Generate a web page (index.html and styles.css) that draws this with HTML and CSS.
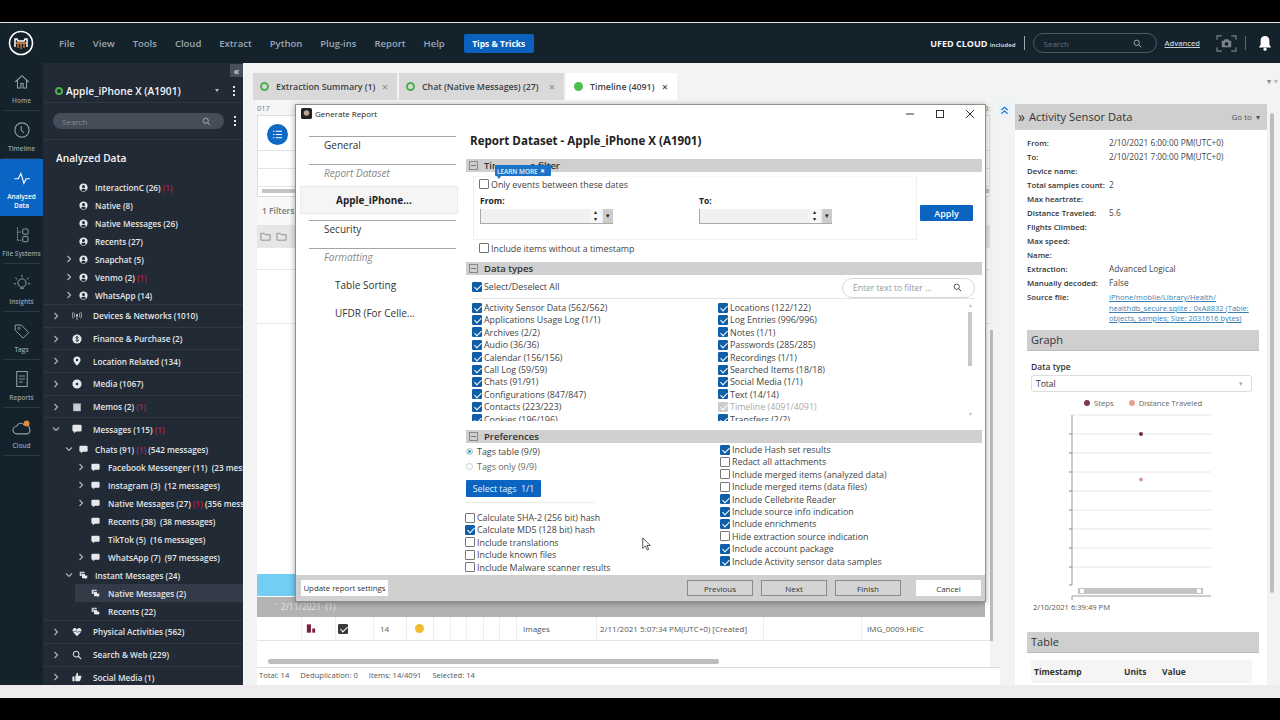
FILE: index.html
```html
<!DOCTYPE html>
<html lang="en">
<head>
    <meta charset="UTF-8">
    <meta name="viewport" content="width=device-width, initial-scale=1.0">
    <title>Generate Report</title>
    <link rel="stylesheet" href="styles.css">
</head>
<body>

<svg class="sprites" width="0" height="0">
    <symbol id="i-home" viewBox="0 0 24 24"><path d="M3 12 12 3.500 21 12M6 10v10h4.500v-6h3v6H18V10" fill="none" stroke="currentColor" stroke-width="1.400"/></symbol>
    <symbol id="i-clock" viewBox="0 0 24 24"><circle cx="12" cy="12" r="9.500" fill="none" stroke="currentColor" stroke-width="1.500"/><path d="M11 6.500V12l3.500 4" fill="none" stroke="currentColor" stroke-width="1.400"/></symbol>
    <symbol id="i-pulse" viewBox="0 0 24 24"><path d="M2 13h5l3.500-7 4 13 3-6h5" fill="none" stroke="currentColor" stroke-width="1.500"/></symbol>
    <symbol id="i-files" viewBox="0 0 24 24"><path d="M6 2v18M6 8h5M6 19h5" fill="none" stroke="currentColor" stroke-width="1.200" stroke-dasharray="2 1"/><rect x="13" y="4" width="7" height="7" rx="1" fill="none" stroke="currentColor" stroke-width="1.300"/><rect x="13" y="14" width="7" height="7" rx="1" fill="none" stroke="currentColor" stroke-width="1.300"/></symbol>
    <symbol id="i-bulb" viewBox="0 0 24 24"><circle cx="12" cy="12" r="5.500" fill="none" stroke="currentColor" stroke-width="1.300"/><path d="M9.500 19h5M12 1.500v3M3 5l2.500 2M21 5l-2.500 2M1 13h3M20 13h3" fill="none" stroke="currentColor" stroke-width="1.300"/></symbol>
    <symbol id="i-tag" viewBox="0 0 24 24"><path d="M3 4h8l10 10-7.500 7.500L3 11z" fill="none" stroke="currentColor" stroke-width="1.300"/><circle cx="8" cy="8.500" r="1.500" fill="none" stroke="currentColor"/></symbol>
    <symbol id="i-report" viewBox="0 0 24 24"><path d="M5 2h14v20H5z" fill="none" stroke="currentColor" stroke-width="1.400"/><path d="M8 8h8M8 12h8M8 16h5" fill="none" stroke="currentColor" stroke-width="1.200"/></symbol>
    <symbol id="i-person" viewBox="0 0 24 24"><path fill-rule="evenodd" d="M12 1a11 11 0 1 0 0 22 11 11 0 0 0 0-22zm0 4.500a4 4 0 1 1 0 8 4 4 0 0 1 0-8zM5.500 18.500c1-2.500 3.500-3.500 6.500-3.500s5.500 1 6.500 3.500a9 9 0 0 1-13 0z"/></symbol>
    <symbol id="i-signal" viewBox="0 0 24 24"><circle cx="12" cy="10" r="2.500"/><path d="M12 12v10M7 5c-2.500 3-2.500 7 0 10M17 5c2.500 3 2.500 7 0 10M3.500 2c-4 5-4 11 0 16M20.500 2c4 5 4 11 0 16" fill="none" stroke="currentColor" stroke-width="1.600"/></symbol>
    <symbol id="i-dollar" viewBox="0 0 24 24"><circle cx="12" cy="12" r="11"/><path d="M16 8.500c-1-2-7-2.500-7 .5s7 2.500 7 6-6 2.500-7.500.5M12 4.500v15" fill="none" stroke="#222a35" stroke-width="2"/></symbol>
    <symbol id="i-pin" viewBox="0 0 24 24"><path fill-rule="evenodd" d="M12 1a8.500 8.500 0 0 0-8.500 8.500C3.500 15 12 23 12 23s8.500-8 8.500-13.500A8.500 8.500 0 0 0 12 1zm0 5.500a3 3 0 1 1 0 6 3 3 0 0 1 0-6z"/></symbol>
    <symbol id="i-disc" viewBox="0 0 24 24"><path fill-rule="evenodd" d="M12 1a11 11 0 1 0 0 22 11 11 0 0 0 0-22zm0 8a3 3 0 1 1 0 6 3 3 0 0 1 0-6z"/></symbol>
    <symbol id="i-memo" viewBox="0 0 24 24"><path d="M3 3h18v19H3z" opacity=".85"/><path d="M6 1v4M10 1v4M14 1v4M18 1v4" stroke="#222a35" stroke-width="1.300"/></symbol>
    <symbol id="i-bubble" viewBox="0 0 24 24"><path d="M4 2h16a3 3 0 0 1 3 3v10a3 3 0 0 1-3 3H10l-5 4v-4H4a3 3 0 0 1-3-3V5a3 3 0 0 1 3-3z"/></symbol>
    <symbol id="i-bubbles" viewBox="0 0 24 24"><path d="M2 2h13v4H7v7H2z"/><path d="M8 8h8v4h6v7h-3v3l-3-3H8z"/><path d="M4 5h8M4 8h2" stroke="#222a35" stroke-width="1"/></symbol>
    <symbol id="i-heart" viewBox="0 0 24 24"><path d="M12 22 2.500 12C-1 7 4 1 8.500 3c1.500.6 2.500 1.500 3.500 3 1-1.500 2-2.400 3.500-3C20 1 25 7 21.500 12z"/><path d="M1 11h7l2-3 3 6 2-3h8" fill="none" stroke="#222a35" stroke-width="1.300"/></symbol>
    <symbol id="i-search" viewBox="0 0 24 24"><circle cx="10" cy="10" r="7" fill="none" stroke="currentColor" stroke-width="2.400"/><path d="m15 15 7 7" stroke="currentColor" stroke-width="2.600"/></symbol>
    <symbol id="i-thumb" viewBox="0 0 24 24"><path d="M1 11h5v11H1zM8 11l4-9c2 0 3 1.500 2.500 3.500L14 9h7c1.500 0 2 1.500 1.500 2.500L20 20c-.3 1.200-1 2-2.500 2H8z"/></symbol>
    <symbol id="i-chev" viewBox="0 0 8 8"><path d="M2.500 1 5.500 4 2.500 7" fill="none" stroke="currentColor" stroke-width="1.200"/></symbol>
    <symbol id="i-chev-down" viewBox="0 0 8 8"><path d="M1 2.500 4 5.500 7 2.500" fill="none" stroke="currentColor" stroke-width="1.200"/></symbol>
    <symbol id="i-folder" viewBox="0 0 24 24"><path d="M2 5h7l2 3h11v12H2z" fill="none" stroke="currentColor" stroke-width="1.600"/></symbol>
</svg>

<div class="screen">
    <div class="letterbox-top"></div>

    <!-- Top menu -->
    <header class="topbar">
        <div class="logo">
            <svg viewBox="0 0 26 26" width="26" height="26"><circle cx="13" cy="13" r="11.500" fill="none" stroke="#fff" stroke-width="1.600"/><path d="M7 17V9h2l1 2h6l1-2h2v8" fill="none" stroke="#fff" stroke-width="1.500"/><path d="M8 13h10M10 13v5M13 13v6M16 13v5" stroke="#e08a3c" stroke-width="1.300"/></svg>
        </div>
        <nav class="menu">
            <span>File</span><span>View</span><span>Tools</span><span>Cloud</span><span>Extract</span><span>Python</span><span>Plug-ins</span><span>Report</span><span>Help</span>
        </nav>
        <button class="tips-btn">Tips &amp; Tricks</button>
        <div class="topbar-right">
            <span class="ufed">UFED CLOUD <small>included</small></span>
            <span class="vsep"></span>
            <div class="top-search"><span>Search</span><svg width="9" height="9"><use href="#i-search"/></svg></div>
            <a class="advanced">Advanced</a>
            <svg class="camera" viewBox="0 0 22 18" width="21" height="17"><path d="M1 5V1h5M16 1h5v4M1 13v4h5M16 17h5v-4" fill="none" stroke="#77838d" stroke-width="1.300"/><path d="M6 6h2l1-1.500h4L14 6h2v7H6z" fill="#77838d"/><circle cx="11" cy="9.500" r="2" fill="#14222c"/></svg>
            <span class="vsep vsep-dim"></span>
            <svg class="bell" viewBox="0 0 16 18" width="14" height="16"><path d="M8 1c-3 0-5 2-5 5v5l-2 3h14l-2-3V6c0-3-2-5-5-5z" fill="#fff"/><circle cx="8" cy="16" r="1.800" fill="#fff"/></svg>
        </div>
    </header>

    <div class="main">
        <!-- Icon rail -->
        <aside class="rail">
            <div class="rail-item"><svg><use href="#i-home"/></svg><span>Home</span></div>
            <div class="rail-item"><svg><use href="#i-clock"/></svg><span>Timeline</span></div>
            <div class="rail-item active"><svg><use href="#i-pulse"/></svg><span>Analyzed<br>Data</span></div>
            <div class="rail-item"><svg><use href="#i-files"/></svg><span>File Systems</span></div>
            <div class="rail-item"><svg><use href="#i-bulb"/></svg><span>Insights</span></div>
            <div class="rail-item"><svg><use href="#i-tag"/></svg><span>Tags</span></div>
            <div class="rail-item"><svg><use href="#i-report"/></svg><span>Reports</span></div>
            <div class="rail-item cloud">
                <svg viewBox="0 0 24 24"><path d="M6 19a4.500 4.500 0 0 1-.5-9C7 6 12 5 14 8c3-1 7 .5 7 5 1.500 3-.5 6-3 6z" fill="none" stroke="currentColor" stroke-width="1.300"/><circle cx="17.500" cy="6.500" r="3.500" fill="#e08a3c"/></svg>
                <span>Cloud</span>
            </div>
        </aside>

        <!-- Analyzed data tree -->
        <aside class="tree-panel">
            <button class="collapse-btn">&laquo;</button>
            <div class="device">
                <span class="ring"></span>
                <span class="device-name">Apple_iPhone X (A1901)</span>
                <span class="caret"></span>
                <span class="dots"></span>
            </div>
            <div class="tree-search">
                <div class="pill"><span>Search</span><svg width="9" height="9"><use href="#i-search"/></svg></div>
                <span class="dots"></span>
            </div>
            <h2 class="tree-title">Analyzed Data</h2>

            <div class="tree">
                <div class="row lvl2"><i></i><svg><use href="#i-person"/></svg><span>InteractionC (26) <em>(1)</em></span></div>
                <div class="row lvl2"><i></i><svg><use href="#i-person"/></svg><span>Native (8)</span></div>
                <div class="row lvl2"><i></i><svg><use href="#i-person"/></svg><span>Native Messages (26)</span></div>
                <div class="row lvl2"><i></i><svg><use href="#i-person"/></svg><span>Recents (27)</span></div>
                <div class="row lvl2"><i><svg><use href="#i-chev"/></svg></i><svg><use href="#i-person"/></svg><span>Snapchat (5)</span></div>
                <div class="row lvl2"><i><svg><use href="#i-chev"/></svg></i><svg><use href="#i-person"/></svg><span>Venmo (2) <em>(1)</em></span></div>
                <div class="row lvl2"><i><svg><use href="#i-chev"/></svg></i><svg><use href="#i-person"/></svg><span>WhatsApp (14)</span></div>

                <div class="row group"><i><svg><use href="#i-chev"/></svg></i><svg><use href="#i-signal"/></svg><span>Devices &amp; Networks (1010)</span></div>
                <div class="row group"><i><svg><use href="#i-chev"/></svg></i><svg><use href="#i-dollar"/></svg><span>Finance &amp; Purchase (2)</span></div>
                <div class="row group"><i><svg><use href="#i-chev"/></svg></i><svg><use href="#i-pin"/></svg><span>Location Related (134)</span></div>
                <div class="row group"><i><svg><use href="#i-chev"/></svg></i><svg><use href="#i-disc"/></svg><span>Media (1067)</span></div>
                <div class="row group"><i><svg><use href="#i-chev"/></svg></i><svg><use href="#i-memo"/></svg><span>Memos (2) <em>(1)</em></span></div>
                <div class="row group"><i><svg><use href="#i-chev-down"/></svg></i><svg><use href="#i-bubble"/></svg><span>Messages (115) <em>(1)</em></span></div>

                <div class="row lvl2"><i><svg><use href="#i-chev-down"/></svg></i><svg><use href="#i-bubble"/></svg><span>Chats (91) <em>(1)</em> (542 messages)</span></div>
                <div class="row lvl3"><i><svg><use href="#i-chev"/></svg></i><svg><use href="#i-bubble"/></svg><span>Facebook Messenger (11) &nbsp;(23 messages)</span></div>
                <div class="row lvl3"><i><svg><use href="#i-chev"/></svg></i><svg><use href="#i-bubble"/></svg><span>Instagram (3) &nbsp;(12 messages)</span></div>
                <div class="row lvl3"><i><svg><use href="#i-chev"/></svg></i><svg><use href="#i-bubble"/></svg><span>Native Messages (27) <em>(1)</em> (356 messages)</span></div>
                <div class="row lvl3"><i></i><svg><use href="#i-bubble"/></svg><span>Recents (38) &nbsp;(38 messages)</span></div>
                <div class="row lvl3"><i></i><svg><use href="#i-bubble"/></svg><span>TikTok (5) &nbsp;(16 messages)</span></div>
                <div class="row lvl3"><i><svg><use href="#i-chev"/></svg></i><svg><use href="#i-bubble"/></svg><span>WhatsApp (7) &nbsp;(97 messages)</span></div>
                <div class="row lvl2"><i><svg><use href="#i-chev-down"/></svg></i><svg><use href="#i-bubbles"/></svg><span>Instant Messages (24)</span></div>
                <div class="row lvl3 selected"><i></i><svg><use href="#i-bubbles"/></svg><span>Native Messages (2)</span></div>
                <div class="row lvl3"><i></i><svg><use href="#i-bubbles"/></svg><span>Recents (22)</span></div>

                <div class="row group"><i><svg><use href="#i-chev"/></svg></i><svg><use href="#i-heart"/></svg><span>Physical Activities (562)</span></div>
                <div class="row group"><i><svg><use href="#i-chev"/></svg></i><svg><use href="#i-search"/></svg><span>Search &amp; Web (229)</span></div>
                <div class="row group"><i><svg><use href="#i-chev"/></svg></i><svg><use href="#i-thumb"/></svg><span>Social Media (1)</span></div>
            </div>
        </aside>

        <!-- Tabs and panes -->
        <section class="workspace">
            <div class="tabs">
                <div class="tab tab-summary"><span class="ring small"></span>Extraction Summary (1)<b>&times;</b></div>
                <div class="tab tab-chat"><span class="ring small"></span>Chat (Native Messages) (27)<b>&times;</b></div>
                <div class="tab tab-timeline current"><span class="dot-green"></span>Timeline (4091)<b>&times;</b></div>
                <span class="tabs-end">&#9662; &times;</span>
            </div>

            <div class="panes">
                <div class="timeline">
                    <div class="tl-label"><span>017</span><span>20:</span></div>
                    <div class="tl-chart">
                        <div class="tl-band first"><span class="round-btn"><svg viewBox="0 0 12 12" width="11" height="11"><path d="M4 2.500h7M4 6h7M4 9.500h7M1 2.500h1.500M1 6h1.500M1 9.500h1.500" stroke="#fff" stroke-width="1.200"/></svg></span></div>
                        <div class="tl-band mid"></div>
                        <div class="tl-band rest"></div>
                        <div class="tl-scroll"></div>
                    </div>
                    <div class="tl-filters">1 Filters</div>
                    <div class="tl-toolbar">
                        <svg><use href="#i-folder"/></svg>
                        <svg><use href="#i-folder"/></svg>
                    </div>
                    <div class="tl-list">
                        <div class="tl-line short"></div>
                        <div class="tl-line tall"></div>
                    </div>
                    <div class="tl-selected"></div>
                    <div class="tl-group">&#708;&nbsp; 2/11/2021 &nbsp;(1)</div>
                    <div class="tl-row">
                        <span class="cell"></span>
                        <span class="cell"><svg viewBox="0 0 12 12" width="10" height="11"><path d="M1 1h5v10H1z" fill="#7d1f3f"/><path d="M7.500 6H11v5H7.500z" fill="#7d1f3f"/></svg></span>
                        <span class="cell"><span class="cb on dark"></span></span>
                        <span class="cell">14</span>
                        <span class="cell"><span class="dot-amber"></span></span>
                        <span class="cell"></span><span class="cell"></span><span class="cell"></span><span class="cell"></span><span class="cell"></span>
                        <span class="cell">Images</span>
                        <span class="cell">2/11/2021 5:07:34 PM(UTC+0) [Created]</span>
                        <span class="cell"></span>
                        <span class="cell">IMG_0009.HEIC</span>
                    </div>
                    <div class="tl-hscroll"><div class="thumb"></div></div>
                    <div class="tl-status">
                        <span>Total: 14</span><span>Deduplication: 0</span><span>Items: 14/4091</span><span>Selected: 14</span>
                    </div>
                </div>

                <div class="v-scroll"></div>
                <div class="side-toggle">
                    <span><svg viewBox="0 0 10 10" width="9" height="9"><path d="M1.500 4.500 5 1.500l3.500 3M1.500 8.500 5 5.500l3.500 3" fill="none" stroke="#1a6fc0" stroke-width="1.300"/></svg></span>
                </div>

                <!-- Details panel -->
                <div class="details">
                    <div class="details-head">
                        <span class="raquo">&raquo;</span>
                        <span class="details-title">Activity Sensor Data</span>
                        <span class="goto">Go to &nbsp;&#9662;</span>
                    </div>
                    <dl class="fields">
                        <dt>From:</dt><dd>2/10/2021 6:00:00 PM(UTC+0)</dd>
                        <dt>To:</dt><dd>2/10/2021 7:00:00 PM(UTC+0)</dd>
                        <dt>Device name:</dt><dd></dd>
                        <dt>Total samples count:</dt><dd>2</dd>
                        <dt>Max heartrate:</dt><dd></dd>
                        <dt>Distance Traveled:</dt><dd>5.6</dd>
                        <dt>Flights Climbed:</dt><dd></dd>
                        <dt>Max speed:</dt><dd></dd>
                        <dt>Name:</dt><dd></dd>
                        <dt>Extraction:</dt><dd>Advanced Logical</dd>
                        <dt>Manually decoded:</dt><dd>False</dd>
                        <dt>Source file:</dt><dd class="link">iPhone/mobile/Library/Health/<br>healthdb_secure.sqlite : 0xA8832 (Table:<br>objects, samples; Size: 2031616 bytes)</dd>
                    </dl>
                    <h3 class="bar-title">Graph</h3>
                    <div class="graph-controls">
                        <label>Data type</label>
                        <div class="select">Total<span>&#9662;</span></div>
                        <div class="legend">
                            <span><i class="lg-steps"></i>Steps</span>
                            <span><i class="lg-distance"></i>Distance Traveled</span>
                        </div>
                    </div>
                    <svg class="graph" viewBox="0 0 252 192" width="252" height="192">
                        <path d="M57 5H196M57 24H196M57 43H196M57 62H196M57 81H196M57 100H196M57 119H196M57 138H196M57 157H196" stroke="#e6e6e6"/>
                        <path d="M57 5V175" stroke="#aaa" stroke-width="1.200"/>
                        <path d="M54 24h3M54 43h3M54 62h3M54 81h3M54 100h3M54 119h3M54 138h3M54 157h3M54 175h3" stroke="#888"/>
                        <circle cx="126" cy="24" r="2" fill="#6d2f4b"/>
                        <circle cx="126" cy="69.500" r="2" fill="#d99aa5"/>
                        <rect x="63" y="178" width="125" height="6" fill="#c4c4c4"/>
                        <rect x="65" y="179" width="4" height="4" fill="#fff"/>
                        <rect x="182" y="179" width="4" height="4" fill="#fff"/>
                        <path d="M57 186H196M57 186v4" stroke="#999"/>
                    </svg>
                    <div class="graph-date">2/10/2021 6:39:49 PM</div>
                    <h3 class="bar-title table-bar">Table</h3>
                    <div class="mini-table"><span>Timestamp</span><span>Units</span><span>Value</span></div>
                </div>
                <div class="details-scroll"><div class="thumb"></div></div>
            </div>
        </section>
    </div>

    <div class="letterbox-strip"></div>
    <div class="letterbox-bottom"></div>

    <!-- Generate Report dialog -->
    <div class="dialog">
        <div class="dialog-title">
            <svg viewBox="0 0 12 12" width="11" height="11"><rect width="12" height="12" rx="2" fill="#222"/><circle cx="6" cy="5.500" r="3" fill="#b9a68f"/></svg>
            <span>Generate Report</span>
            <div class="win-buttons">
                <svg viewBox="0 0 10 10" width="10" height="10"><path d="M1 5h8" stroke="#333"/></svg>
                <svg viewBox="0 0 10 10" width="10" height="10"><rect x="1.500" y="1.500" width="7" height="7" fill="none" stroke="#333"/></svg>
                <svg viewBox="0 0 10 10" width="10" height="10"><path d="m1 1 8 8M9 1 1 9" stroke="#333"/></svg>
            </div>
        </div>

        <div class="dialog-body">
            <nav class="steps">
                <div class="step line">General</div>
                <div class="step line muted">Report Dataset</div>
                <div class="step-sel">Apple_iPhone...</div>
                <div class="step line">Security</div>
                <div class="step line muted">Formatting</div>
                <div class="sub">Table Sorting</div>
                <div class="sub">UFDR (For Celle...</div>
            </nav>

            <div class="dataset">
                <h1>Report Dataset - Apple_iPhone X (A1901)</h1>

                <div class="section-bar"><span class="minus"></span>Timestamp filter</div>
                <div class="ts-wrap">
                    <div class="ts-panel">
                        <label class="check"><span class="cb"></span>Only events between these dates</label>
                        <div class="ts-fields">
                            <div>
                                <div class="ts-label">From:</div>
                                <div class="date-input"><span class="spin">&#9652;<br>&#9662;</span><span class="drop">&#9662;</span></div>
                            </div>
                            <div>
                                <div class="ts-label">To:</div>
                                <div class="date-input"><span class="spin">&#9652;<br>&#9662;</span><span class="drop">&#9662;</span></div>
                            </div>
                        </div>
                    </div>
                    <button class="apply-btn">Apply</button>
                </div>
                <label class="check no-ts"><span class="cb"></span>Include items without a timestamp</label>

                <div class="section-bar data-types"><span class="minus"></span>Data types</div>
                <div class="select-all">
                    <label class="check"><span class="cb on"></span>Select/Deselect All</label>
                    <div class="filter-input"><span>Enter text to filter ...</span><svg width="9" height="9"><use href="#i-search"/></svg></div>
                </div>
                <div class="types">
                    <div class="types-col">
                        <label class="check"><span class="cb on"></span>Activity Sensor Data (562/562)</label>
                        <label class="check"><span class="cb on"></span>Applications Usage Log (1/1)</label>
                        <label class="check"><span class="cb on"></span>Archives (2/2)</label>
                        <label class="check"><span class="cb on"></span>Audio (36/36)</label>
                        <label class="check"><span class="cb on"></span>Calendar (156/156)</label>
                        <label class="check"><span class="cb on"></span>Call Log (59/59)</label>
                        <label class="check"><span class="cb on"></span>Chats (91/91)</label>
                        <label class="check"><span class="cb on"></span>Configurations (847/847)</label>
                        <label class="check"><span class="cb on"></span>Contacts (223/223)</label>
                        <label class="check"><span class="cb on"></span>Cookies (196/196)</label>
                    </div>
                    <div class="types-col">
                        <label class="check"><span class="cb on"></span>Locations (122/122)</label>
                        <label class="check"><span class="cb on"></span>Log Entries (996/996)</label>
                        <label class="check"><span class="cb on"></span>Notes (1/1)</label>
                        <label class="check"><span class="cb on"></span>Passwords (285/285)</label>
                        <label class="check"><span class="cb on"></span>Recordings (1/1)</label>
                        <label class="check"><span class="cb on"></span>Searched Items (18/18)</label>
                        <label class="check"><span class="cb on"></span>Social Media (1/1)</label>
                        <label class="check"><span class="cb on"></span>Text (14/14)</label>
                        <label class="check disabled"><span class="cb on"></span>Timeline (4091/4091)</label>
                        <label class="check"><span class="cb on"></span>Transfers (2/2)</label>
                    </div>
                    <div class="types-scroll">
                        <span class="arrow">&#9652;</span>
                        <div class="thumb"></div>
                        <span class="arrow down">&#9662;</span>
                    </div>
                </div>

                <div class="section-bar prefs-bar"><span class="minus"></span>Preferences</div>
                <div class="prefs">
                    <div class="prefs-left">
                        <label class="radio"><span class="rb on"></span>Tags table (9/9)</label>
                        <label class="radio dim"><span class="rb"></span>Tags only (9/9)</label>
                        <button class="tags-btn">Select tags &nbsp;1/1</button>
                        <div class="prefs-rule"></div>
                        <label class="check"><span class="cb"></span>Calculate SHA-2 (256 bit) hash</label>
                        <label class="check"><span class="cb on"></span>Calculate MD5 (128 bit) hash</label>
                        <label class="check"><span class="cb"></span>Include translations</label>
                        <label class="check"><span class="cb"></span>Include known files</label>
                        <label class="check"><span class="cb"></span>Include Malware scanner results</label>
                    </div>
                    <div class="prefs-right">
                        <label class="check"><span class="cb on"></span>Include Hash set results</label>
                        <label class="check"><span class="cb"></span>Redact all attachments</label>
                        <label class="check"><span class="cb"></span>Include merged items (analyzed data)</label>
                        <label class="check"><span class="cb"></span>Include merged items (data files)</label>
                        <label class="check"><span class="cb on"></span>Include Cellebrite Reader</label>
                        <label class="check"><span class="cb on"></span>Include source info indication</label>
                        <label class="check"><span class="cb on"></span>Include enrichments</label>
                        <label class="check"><span class="cb"></span>Hide extraction source indication</label>
                        <label class="check"><span class="cb on"></span>Include account package</label>
                        <label class="check"><span class="cb on"></span>Include Activity sensor data samples</label>
                    </div>
                </div>
            </div>
        </div>

        <div class="dialog-foot">
            <button class="btn-white update">Update report settings</button>
            <div class="foot-right">
                <button class="btn-gray">Previous</button>
                <button class="btn-gray">Next</button>
                <button class="btn-gray">Finish</button>
                <button class="btn-white cancel">Cancel</button>
            </div>
        </div>

        <div class="learn-more">LEARN MORE <b>&times;</b></div>
        <svg class="cursor" viewBox="0 0 12 18" width="9" height="14"><path d="M1 1v14l3.500-3.500 2.500 5.500 2-1-2.500-5H11z" fill="#fff" stroke="#222"/></svg>
    </div>
</div>

</body>
</html>
```

FILE: styles.css
```css
* {
    margin: 0;
    padding: 0;
    box-sizing: border-box;
}

body {
    font-family: 'Open Sans', 'Noto Sans', sans-serif;
    font-size: 9px;
    background: #000;
    overflow: hidden;
}

.sprites {
    position: absolute;
}

button {
    font-family: inherit;
    border: none;
}

.screen {
    position: relative;
    width: 1280px;
    height: 720px;
    display: flex;
    flex-direction: column;
}

.letterbox-top {
    height: 23px;
    background: #000;
    border-bottom: 1px solid #e8e8e8;
}

.letterbox-strip {
    height: 13px;
    background: #efecee;
}

.letterbox-bottom {
    height: 22px;
    background: #000;
}

/* Top bar */
.topbar {
    height: 40px;
    background: #14222c;
    display: flex;
    align-items: center;
    color: #9aa7b2;
}

.logo {
    width: 42px;
    display: flex;
    justify-content: center;
}

.menu {
    display: flex;
    gap: 18px;
    margin-left: 17px;
    font-size: 9.500px;
    font-weight: 600;
}

.tips-btn {
    margin-left: 19px;
    width: 70px;
    height: 19px;
    background: #0a62bd;
    color: #fff;
    border-radius: 2px;
    font-size: 8.500px;
    font-weight: 700;
}

.topbar-right {
    margin-left: auto;
    display: flex;
    align-items: center;
    padding-right: 8px;
}

.ufed {
    color: #f2f4f6;
    font-size: 9px;
    font-weight: 700;
}

.ufed small {
    font-size: 6px;
    color: #c3ccd3;
}

.vsep {
    width: 1px;
    height: 14px;
    background: #9aa7b2;
    margin: 0 8px;
}

.vsep-dim {
    background: #5a6670;
    margin: 0 12px 0 8px;
}

.top-search {
    width: 124px;
    height: 20px;
    border: 1px solid #4c5a65;
    border-radius: 10px;
    display: flex;
    align-items: center;
    justify-content: space-between;
    padding: 0 14px 0 10px;
    font-size: 8px;
    color: #64727d;
}

.top-search svg {
    color: #a9b4bd;
}

.advanced {
    margin-left: 8px;
    color: #c6ced5;
    font-size: 7.500px;
    font-weight: 600;
    text-decoration: underline;
}

.camera {
    margin-left: 16px;
}

/* Main area */
.main {
    flex: 1;
    display: flex;
    min-height: 0;
}

.rail {
    width: 43px;
    background: #14222c;
}

.rail-item {
    height: 48px;
    margin: 0 3px;
    display: flex;
    flex-direction: column;
    align-items: center;
    padding-top: 10px;
    border-bottom: 1px solid #2c3944;
    color: #93a0ab;
}

.rail-item svg {
    width: 18px;
    height: 18px;
    margin-bottom: 5px;
}

.rail-item span {
    font-size: 6.500px;
    font-weight: 600;
    line-height: 9px;
    text-align: center;
    white-space: nowrap;
}

.rail-item.active {
    height: 57px;
    margin: 0;
    background: #0a64c4;
    color: #fff;
    border-bottom: none;
}

.rail-item.cloud svg {
    width: 20px;
    height: 20px;
    margin-bottom: 3px;
}

/* Tree panel */
.tree-panel {
    position: relative;
    width: 200px;
    background: #222a35;
    color: #e3e7eb;
    overflow: hidden;
}

.collapse-btn {
    position: absolute;
    top: 1px;
    right: 0;
    width: 13px;
    height: 13px;
    background: #46505b;
    color: #e8ecef;
    font-size: 11px;
    line-height: 11px;
}

.device {
    height: 40px;
    display: flex;
    align-items: center;
    padding: 16px 0 0 12px;
    border-bottom: 1px solid #2e3742;
}

.ring {
    width: 8px;
    height: 8px;
    border: 2px solid #4cb04a;
    border-radius: 50%;
    margin-right: 3px;
}

.device-name {
    font-size: 10.200px;
    font-weight: 600;
    color: #f3f5f7;
}

.caret {
    margin-left: 34px;
    border: 2.500px solid transparent;
    border-top: 3px solid #b8c0c7;
    border-bottom: none;
}

.dots {
    margin-left: 14px;
    width: 2px;
    height: 2px;
    background: #e4e8eb;
    box-shadow: 0 -4px 0 #e4e8eb, 0 4px 0 #e4e8eb;
}

.tree-search {
    height: 37px;
    display: flex;
    align-items: center;
    padding-left: 10px;
    border-bottom: 1px solid #2e3742;
}

.pill {
    width: 171px;
    height: 16px;
    border-radius: 8px;
    background: #444d58;
    display: flex;
    align-items: center;
    justify-content: space-between;
    padding: 0 13px 0 9px;
    color: #7f8a95;
    font-size: 8px;
}

.pill svg {
    color: #aab3bb;
}

.tree-search .dots {
    margin-left: 10px;
}

.tree-title {
    font-size: 10.200px;
    font-weight: 600;
    color: #f2f4f6;
    padding: 11px 0 0 13px;
    height: 38px;
}

.tree .row {
    display: flex;
    align-items: center;
    height: 18px;
    font-size: 8.200px;
    font-weight: 600;
    white-space: nowrap;
}

.row i {
    width: 8px;
    height: 8px;
    color: #aab3bb;
    flex: none;
}

.row i svg {
    width: 8px;
    height: 8px;
    display: block;
}

.row > svg {
    width: 9px;
    height: 9px;
    margin: 0 7px 0 6px;
    flex: none;
    fill: #e6e9ec;
    color: #e6e9ec;
}

.row em {
    font-style: normal;
    color: #b3245f;
}

.row.lvl2 {
    padding-left: 22px;
}

.row.lvl3 {
    padding-left: 34px;
}

.row.lvl3 > svg {
    margin-right: 8px;
}

.tree .row.group {
    height: 22.700px;
    padding-left: 9px;
    border-top: 1px solid #2e3742;
}

.row.group > svg {
    width: 10px;
    height: 10px;
    margin: 0 11px 0 12px;
}

.row.selected {
    background: #343b48;
    margin-left: 32px;
    padding-left: 2px;
}

/* Workspace */
.workspace {
    flex: 1;
    min-width: 0;
    background: #f2f3f3;
    border-left: 1px solid #f7f7f7;
    display: flex;
    flex-direction: column;
}

.tabs {
    height: 37px;
    display: flex;
    align-items: flex-end;
    gap: 2px;
    padding-left: 9px;
    position: relative;
}

.tab {
    height: 27px;
    background: #d9d9d9;
    display: flex;
    align-items: center;
    padding: 0 9px 0 7px;
    font-size: 8.800px;
    font-weight: 600;
    color: #3a3f45;
    white-space: nowrap;
}

.tab-summary {
    width: 144px;
}

.tab-chat {
    width: 165px;
}

.tab-timeline {
    width: 111px;
}

.tab b {
    margin-left: auto;
    font-weight: 400;
    font-size: 11px;
    color: #8b8b8b;
}

.tab .ring.small {
    margin-right: 7px;
    width: 9px;
    height: 9px;
}

.tab.current {
    background: #fff;
}

.tab.current b {
    color: #333;
}

.dot-green {
    width: 9px;
    height: 9px;
    border-radius: 50%;
    background: #4cc04a;
    margin: 0 7px 0 1px;
}

.tabs-end {
    position: absolute;
    right: 2px;
    top: 12px;
    color: #888;
    font-size: 8px;
}

.panes {
    flex: 1;
    min-height: 0;
    display: flex;
    padding-left: 13px;
}

/* Timeline behind the dialog */
.timeline {
    width: 733px;
    background: #fff;
    display: flex;
    flex-direction: column;
    color: #555;
}

.tl-label {
    height: 15px;
    display: flex;
    justify-content: space-between;
    align-items: center;
    font-size: 7.500px;
    color: #777;
    background: #f6f6f6;
}

.tl-chart {
    height: 82px;
    border: 1px solid #ddd;
    display: flex;
    flex-direction: column;
}

.tl-band {
    border-bottom: 1px solid #e4e4e4;
}

.tl-band.first {
    height: 35px;
    padding: 8px 0 0 9px;
}

.tl-band.mid,
.tl-band.rest {
    height: 18px;
}

.tl-scroll {
    height: 4px;
    margin: 2px 0 0 4px;
    background: #c4c4c4;
}

.round-btn {
    display: flex;
    align-items: center;
    justify-content: center;
    width: 21px;
    height: 21px;
    border-radius: 50%;
    background: #0f69c4;
}

.tl-filters {
    height: 28px;
    line-height: 28px;
    padding-left: 5px;
    font-size: 8.500px;
    font-weight: 600;
    color: #777;
    background: #f8f8f8;
}

.tl-toolbar {
    height: 23px;
    background: #e6e6e6;
    display: flex;
    align-items: center;
    gap: 5px;
    padding-left: 3px;
    color: #777;
}

.tl-toolbar svg {
    width: 11px;
    height: 11px;
}

.tl-list {
    flex: 1;
}

.tl-line {
    border-bottom: 1px solid #e8e8e8;
}

.tl-line.short {
    height: 22px;
}

.tl-line.tall {
    height: 54px;
}

.tl-selected {
    height: 22px;
    background: #74cdf5;
    margin: 0 5px 1px 0;
}

.tl-group {
    height: 20px;
    line-height: 20px;
    margin-right: 5px;
    background: #b3b3b3;
    color: #e4e4e4;
    font-size: 8.500px;
    padding-left: 17px;
}

.tl-row {
    height: 24px;
    display: grid;
    grid-template-columns: 45px 34px 38px 33px 27px 17px 16px 17px 16px 17px 80px 167px 98px 1fr;
    border-bottom: 1px solid #e2e2e2;
    font-size: 8px;
    color: #555;
    white-space: nowrap;
}

.cell {
    border-right: 1px solid #eee;
    display: flex;
    align-items: center;
}

.cell:nth-child(2) {
    padding-left: 4px;
}

.cell:nth-child(3) {
    padding-left: 2px;
}

.cell:nth-child(4) {
    padding-left: 6px;
}

.cell:nth-child(5) {
    padding-left: 8px;
}

.cell:nth-child(11) {
    padding-left: 6px;
}

.cell:nth-child(12) {
    padding-left: 3px;
}

.cell:nth-child(14) {
    padding-left: 5px;
    border-right: none;
}

.dot-amber {
    width: 9px;
    height: 9px;
    border-radius: 50%;
    background: #f1bb2e;
}

.tl-hscroll {
    height: 26px;
    padding: 18px 0 0 11px;
}

.tl-hscroll .thumb {
    width: 451px;
    height: 5px;
    border-radius: 2px;
    background: #bdbdbd;
}

.tl-status {
    height: 18px;
    border-top: 1px solid #ddd;
    margin-right: -10px;
    display: flex;
    align-items: center;
    gap: 11px;
    padding: 0 0 3px 2px;
    font-size: 7.600px;
    color: #555;
    background: #fff;
}

.v-scroll {
    width: 6px;
    border-left: 3px solid #bbb;
    margin: 230px 0 44px 0;
}

.side-toggle {
    width: 19px;
    padding: 3px 0 0 2px;
}

.side-toggle span {
    display: flex;
    align-items: center;
    justify-content: center;
    width: 13px;
    height: 14px;
    background: #eaf3fa;
}

/* Details panel */
.details {
    width: 252px;
    margin-top: 4px;
    background: #fff;
    color: #333;
    overflow: hidden;
}

.details-head {
    height: 26px;
    background: #cfcfcf;
    display: flex;
    align-items: center;
    padding: 0 7px 1px 3px;
}

.raquo {
    font-size: 14px;
    margin-right: 4px;
}

.details-title {
    font-size: 11.200px;
    font-weight: 500;
}

.goto {
    margin-left: auto;
    font-size: 8px;
    color: #555;
}

.fields {
    display: grid;
    grid-template-columns: 82px 1fr;
    grid-auto-rows: 14px;
    padding: 6px 0 0 12px;
    font-size: 8.300px;
    line-height: 14px;
    white-space: nowrap;
}

.fields dt {
    font-weight: 600;
    font-size: 7.800px;
}

.fields dd {
    color: #444;
}

.fields .link {
    color: #3b7fb4;
    font-size: 7.500px;
    text-decoration: underline;
    line-height: 10.500px;
    padding-top: 2px;
}

.bar-title {
    margin: 26px 8px 0 12px;
    height: 21px;
    line-height: 20px;
    background: #cfcfcf;
    border-bottom: 1px solid #bbb;
    font-size: 11px;
    font-weight: 500;
    padding-left: 4px;
}

.graph-controls {
    padding: 9px 0 0 16px;
}

.graph-controls label {
    display: block;
    font-weight: 600;
    font-size: 8.500px;
    line-height: 14px;
}

.select {
    width: 221px;
    height: 17px;
    margin-top: 1px;
    border: 1px solid #ddd;
    border-radius: 3px;
    display: flex;
    align-items: center;
    justify-content: space-between;
    padding: 0 8px 0 4px;
    font-size: 8.500px;
}

.select span {
    color: #aaa;
    font-size: 7px;
}

.legend {
    display: flex;
    gap: 15px;
    padding-left: 53px;
    height: 22px;
    align-items: center;
    font-size: 7.700px;
    color: #666;
}

.legend i {
    display: inline-block;
    width: 6px;
    height: 6px;
    border-radius: 50%;
    margin-right: 4px;
}

.legend .lg-steps {
    background: #7c3a56;
}

.legend .lg-distance {
    background: #e3a096;
}

.graph {
    display: block;
    margin-top: -4px;
}

.graph-date {
    margin: 0 0 0 18px;
    height: 12px;
    font-size: 7.600px;
    color: #555;
}

.bar-title.table-bar {
    margin-top: 18px;
}

.mini-table {
    margin: 7px 15px 0 16px;
    height: 23px;
    background: #f5f5f5;
    display: grid;
    grid-template-columns: 90px 38px 1fr;
    align-items: center;
    padding-left: 3px;
    font-size: 8.500px;
    font-weight: 700;
}

.details-scroll {
    width: 13px;
    padding: 13px 0 0 3px;
}

.details-scroll .thumb {
    width: 4px;
    height: 480px;
    background: #bdbdbd;
    border-radius: 2px;
}

/* Dialog */
.dialog {
    position: absolute;
    left: 295px;
    top: 104px;
    width: 691px;
    height: 498px;
    background: #fff;
    border: 1px solid #8f8f8f;
    box-shadow: 0 1px 6px rgba(0, 0, 0, 0.35);
    color: #333;
    display: flex;
    flex-direction: column;
}

.dialog-title {
    height: 19px;
    display: flex;
    align-items: center;
    gap: 3px;
    padding: 0 0 2px 5px;
    font-size: 8px;
    color: #222;
}

.win-buttons {
    margin-left: auto;
    display: flex;
    gap: 20px;
    padding-right: 10px;
}

.dialog-body {
    flex: 1;
    display: flex;
    min-height: 0;
}

.steps {
    width: 170px;
    padding-top: 12px;
    font-size: 10px;
    color: #333;
}

.step {
    height: 28px;
    margin: 0 10px 0 13px;
    padding: 1px 0 0 15px;
    line-height: 14px;
}

.step.line {
    border-top: 1px solid #a5a5a5;
}

.step.muted {
    font-style: italic;
    color: #888;
    height: 22px;
}

.step-sel {
    height: 28px;
    line-height: 27px;
    margin: 0 8px 6px 4px;
    padding-left: 35px;
    background: #f5f5f5;
    border: 1px solid #ebebeb;
    font-weight: 700;
    color: #222;
}

.sub {
    padding-left: 39px;
    height: 27.500px;
    line-height: 14px;
}

.step.muted + .sub {
    margin-top: 8px;
}

.dataset {
    flex: 1;
    min-width: 0;
    padding-right: 3px;
}

.dataset h1 {
    font-size: 11.600px;
    font-weight: 700;
    color: #222;
    height: 18px;
    line-height: 18px;
    margin: 8px 0 9px 4px;
    white-space: nowrap;
}

.section-bar {
    height: 13px;
    background: #cfcfcf;
    display: flex;
    align-items: center;
    font-size: 9.500px;
    font-weight: 600;
    color: #333;
    padding-left: 3px;
}

.minus {
    width: 9px;
    height: 9px;
    border: 1px solid #888;
    margin-right: 6px;
    background: linear-gradient(#777, #777) no-repeat center / 5px 1px;
}

.section-bar.data-types {
    margin-top: 8px;
}

.check {
    display: flex;
    align-items: center;
    height: 12.400px;
    white-space: nowrap;
    font-size: 8.900px;
    color: #444;
}

.cb {
    position: relative;
    flex: none;
    width: 10px;
    height: 10px;
    margin-right: 2px;
    border: 1px solid #777;
    border-radius: 1px;
    background: #fff;
}

.cb.on {
    background: #0e5ea8;
    border-color: #0e5ea8;
}

.cb.on::after {
    content: "";
    position: absolute;
    left: 2.500px;
    top: 0.500px;
    width: 3px;
    height: 6px;
    border: solid #fff;
    border-width: 0 1.300px 1.300px 0;
    transform: rotate(45deg);
}

.cb.on.dark {
    background: #3a3a3a;
    border-color: #3a3a3a;
}

.check.disabled {
    color: #aaa;
}

.check.disabled .cb {
    background: #ccc;
    border-color: #ccc;
}

/* Timestamp filter */
.ts-wrap {
    display: flex;
    margin-top: 4px;
}

.ts-panel {
    width: 444px;
    height: 64px;
    margin-left: 7px;
    padding: 1px 0 0 5px;
    border: 1px solid #f0f0f0;
    border-top-color: #f7f7f7;
}

.ts-fields {
    display: grid;
    grid-template-columns: 219px 1fr;
    margin-top: 5px;
}

.ts-label {
    font-weight: 700;
    font-size: 8.500px;
    line-height: 12px;
    color: #222;
    height: 14px;
    padding-left: 1px;
}

.date-input {
    width: 133px;
    height: 15px;
    margin-left: 1px;
    background: #f1f1f1;
    border: 1px solid #aaa;
    border-width: 0 0 1px 1px;
    display: flex;
    justify-content: flex-end;
    gap: 2px;
}

.spin {
    width: 11px;
    font-size: 6px;
    line-height: 7px;
    text-align: center;
    color: #222;
    background: #f8f8f8;
}

.drop {
    width: 10px;
    font-size: 7px;
    line-height: 14px;
    text-align: center;
    color: #222;
    background: #ccc;
}

.apply-btn {
    width: 53px;
    height: 16px;
    margin: 29px 0 0 3px;
    background: #0a64c0;
    color: #fff;
    font-size: 9px;
    font-weight: 600;
    border-radius: 1px;
}

.no-ts {
    margin: 2px 0 0 13px;
}

/* Data types */
.select-all {
    height: 24px;
    display: flex;
    align-items: center;
    justify-content: space-between;
    margin: 0 7px 0 6px;
    border-bottom: 1px solid #e4e4e4;
}

.filter-input {
    width: 133px;
    height: 20px;
    margin-top: 2px;
    border: 1px solid #d8d8d8;
    border-radius: 10px;
    display: flex;
    align-items: center;
    justify-content: space-between;
    padding: 0 12px 0 10px;
    font-size: 8.500px;
    color: #999;
}

.filter-input svg {
    color: #444;
}

.types {
    height: 120px;
    margin-top: 2px;
    padding-left: 6px;
    display: flex;
    overflow: hidden;
}

.types-col {
    width: 246px;
}

.types-scroll {
    margin-left: 4px;
    width: 4px;
    display: flex;
    flex-direction: column;
    align-items: center;
}

.types-scroll .arrow {
    font-size: 6px;
    line-height: 9px;
    color: #bbb;
}

.types-scroll .arrow.down {
    margin-top: auto;
    margin-bottom: 2px;
}

.types-scroll .thumb {
    flex: none;
    width: 4px;
    height: 54px;
    margin-top: 2px;
    background: #c8c8c8;
}

.section-bar.prefs-bar {
    margin-top: 9px;
}

/* Preferences */
.prefs {
    display: flex;
}

.prefs-left {
    width: 254px;
    margin-left: -1px;
    padding-top: 1px;
}

.radio {
    display: flex;
    align-items: center;
    height: 15px;
    font-size: 8.900px;
    color: #444;
}

.radio.dim {
    color: #666;
}

.rb {
    width: 7px;
    height: 7px;
    margin: 0 4px 0 1px;
    border: 1px solid #ccc;
    border-radius: 50%;
}

.rb.on {
    background: #2a9ab0;
    box-shadow: inset 0 0 0 1px #fff;
}

.tags-btn {
    display: block;
    width: 75px;
    height: 17px;
    margin: 6px 0 0 1px;
    background: #0a64c0;
    color: #e8f1fa;
    font-size: 8.800px;
    font-weight: 500;
    border-radius: 1px;
}

.prefs-rule {
    width: 131px;
    height: 1px;
    margin: 5px 0 8px;
    background: #eee;
}

.prefs-right {
    margin-left: 1px;
}

.dialog-foot {
    height: 26px;
    background: #d0d0d0;
    display: flex;
    align-items: center;
    justify-content: space-between;
    padding: 0 4px 0 5px;
}

.foot-right {
    display: flex;
    gap: 8px;
}

.dialog-foot button {
    height: 16px;
    font-size: 8px;
    color: #333;
}

.btn-white {
    background: #fff;
    border-radius: 1px;
}

.dialog-foot .update {
    width: 87px;
    font-size: 7.800px;
    padding: 0;
}

.cancel {
    width: 65px;
    margin-left: 7px;
}

.btn-gray {
    width: 66px;
    background: #d4d4d4;
    border: 1px solid #8a8a8a;
}

.learn-more {
    position: absolute;
    left: 199px;
    top: 60px;
    width: 56px;
    height: 11px;
    line-height: 11px;
    background: #1a73c9;
    border-radius: 1px;
    color: #e6f0fa;
    font-size: 6.400px;
    font-weight: 600;
    padding-left: 2px;
    white-space: nowrap;
}

/* hides the top of the section title behind the bubble */
.learn-more::before {
    content: "";
    position: absolute;
    left: 0;
    top: -6px;
    width: 36px;
    height: 6px;
    background: #cfcfcf;
}

.learn-more::after {
    content: "";
    position: absolute;
    left: 2px;
    bottom: -3px;
    border: 2.500px solid transparent;
    border-top: 3px solid #1a73c9;
    border-bottom: none;
}

.learn-more b {
    font-size: 8px;
    margin-left: 1px;
}

.cursor {
    position: absolute;
    left: 346px;
    top: 432px;
}
```
